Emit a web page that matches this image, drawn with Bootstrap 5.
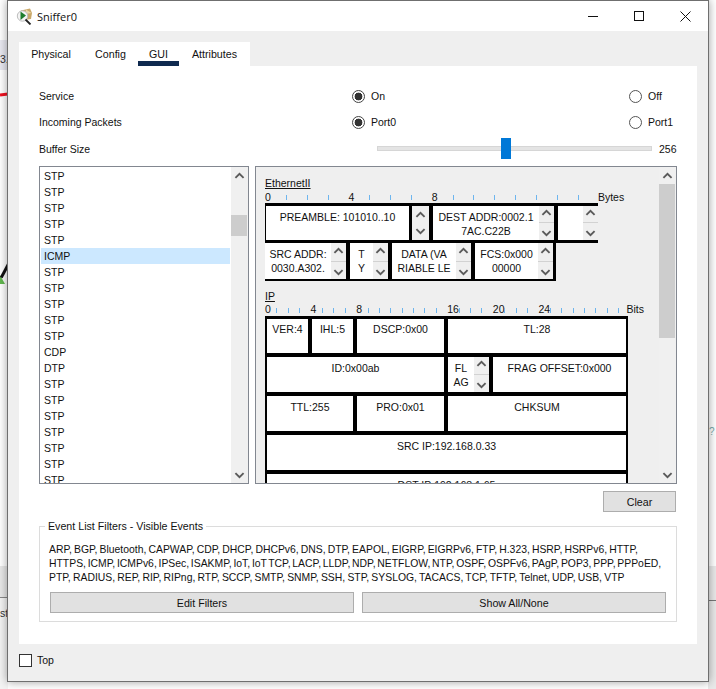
<!DOCTYPE html>
<html lang="en">
<head>
<meta charset="utf-8">
<title>Sniffer0</title>
<link href="https://cdn.jsdelivr.net/npm/bootstrap@5.3.0/dist/css/bootstrap.min.css" rel="stylesheet">
<style>
html,body{height:689px;overflow:hidden}
body{background:#fff;position:relative;font:10.5px/14px "Liberation Sans",Arial,sans-serif;color:#111}
.decor{position:absolute;overflow:hidden;color:#333}
.d-a{left:0;top:40px;width:8px;height:30px;background:#e9e9f1;padding-top:12px}
.d-b{left:0;top:93px;width:8px;height:3px;background:#f01020;transform:rotate(-6deg)}
.d-c{left:-3px;top:269px;width:16px;height:3px;background:#111;transform:rotate(-62deg)}
.d-d{left:0;top:275px;width:5px;height:9px;background:#62b84f;clip-path:polygon(0 0,100% 100%,0 100%)}
.d-e{left:0;top:566px;width:8px;height:123px;background:#e8e8e8}
.d-f{left:0;top:597px;width:8px;height:92px;background:#f4f4f4;border-top:1px solid #888;padding-top:8px}
.d-g{left:708px;top:566px;width:8px;height:123px;background:#e9e9e9}
.d-h{left:708px;top:600px;width:8px;height:1px;background:#777}
.d-i{left:709px;top:425px;color:#7aa;font-size:10px}
.winbox{position:absolute;left:7px;top:0;width:702px;height:682px;background:#efefef;border:1px solid #6f6f6f;box-shadow:0 0 9px rgba(0,0,0,.38)}
.titlerow{height:30px;background:#fff;padding-left:8px}
.titletext{font:11px "Open Sans",sans-serif;color:#111;margin-left:4px}
.capbtn{width:46px;height:30px}
.tabzone{padding:11px 11px 0}
.tabset{width:231px;height:24px;background:#fff;flex-wrap:nowrap}
.tabset .nav-link{height:24px;padding:5px 0 0;text-align:center;color:#111;font-size:10.67px;line-height:14px}
.tabset .nav-link.active{border-bottom:5px solid #0f2a4f}
.tb1{width:64px}.tb2{width:55px}.tb3{width:41px}.tb4{width:71px}
.mainpanel{background:#fff;height:578px;padding:17px 20px 0}
.setrow{height:26px}
.setdrop{margin-top:1px}
.setname{width:313px}
.setmid{width:277px}
.pick{width:13px;height:13px;margin:0 6px 0 0;border:1px solid #555;background-color:#fff;flex:none;float:none}
.pick:checked{background-color:#fff;border-color:#444;background-image:radial-gradient(circle,#333 3.6px,transparent 4.2px)}
.pick:focus{box-shadow:none;border-color:#555}
.squarebox[type=checkbox]{width:13px;height:13px;margin:0 5px 0 0;border:1px solid #333;border-radius:0;float:none}
.slide{width:275px;height:21px;margin:-2px 0 0 25px;padding:0}
.slide::-webkit-slider-runnable-track{height:5px;background:#e4e4e4;border:1px solid #d6d6d6;border-radius:0}
.slide::-webkit-slider-thumb{appearance:none;-webkit-appearance:none;width:10px;height:21px;margin-top:-9px;background:#0078d7;border-radius:0;border:0}
.slideval{margin-left:7px}
.workzone{height:318px;gap:6px;margin-top:4px}
.loglist{width:210px;border:1px solid #828790;background:#fff;overflow:hidden}
.logitems{width:191px;padding:1px 1px 0 1px;overflow:hidden}
.logitems div{height:16px;line-height:16px;padding-left:3px}
.logitems .picked{background:#cce8ff}
.vbar{width:17px;background:#f0f0f0;flex:none;position:relative}
.vbar svg{display:block;margin:0 auto}
.vup{padding-top:5px}
.vbar .vdown{position:absolute;bottom:4px;left:3px}
.thumb-a{position:absolute;left:0;right:1px;top:48px;height:21px;background:#cdcdcd}
.thumb-b{position:absolute;left:0;right:1px;top:17px;height:154px;background:#cdcdcd}
.detailbox{width:422px;border:1px solid #828790;background:#efefef;overflow:hidden}
.detailflow{flex:1;min-width:0;padding:10px 0 0 9px;overflow:hidden}
.blocktitle{height:13px;line-height:13px;text-decoration:underline}
.mtip{margin-top:9px}
.ruler{height:13px;line-height:13px;flex-wrap:nowrap}
.rule8{padding-top:1px}
.rule8 .rc{width:20.85px}
.rule32 .rc{width:11.4px}
.rc{flex:none;display:flex;align-items:center;white-space:nowrap}
.rc i{display:block;width:1px;height:5px;background:#6db5ee;margin-top:1px}
.unit8{margin-left:-.6px}
.unit32{margin-left:-3px}
.prow{background:#000;flex-wrap:nowrap}
.cellw{background:#fff;text-align:center;overflow:hidden;white-space:nowrap;display:flex}
.cellw>span{flex:1;min-width:0;overflow:hidden;padding-top:3px}
.spin{width:15px;flex:none;background:#efefef;display:flex;flex-direction:column;align-items:center;justify-content:space-around}
.spin svg{display:block}
.spin hr{margin:0;width:100%;border:0;height:1px;background:#d2d2d2;opacity:1}
.e1{width:333px;padding:3px 0 3px 1px;height:40px}
.e1 .cellw{height:34px}
.e2{width:291px;height:38px;padding-bottom:2px}
.e2 .cellw{height:36px}
.pv{padding-top:4px!important}
.w143{width:143px}.w17{width:17px}.w121{width:121px}.w40{width:40px}
.w81{width:81px}.w38{width:38px}.w79{width:79px}.w78{width:78px}
.w41{width:41px}.w87{width:87px}.w178{width:178px}.w177{width:177px}.w133{width:133px}.w86{width:86px}.w359{width:359px}
.m3{margin-left:3px}.m4{margin-left:4px}
.iprow{width:363px;padding:0 2px 4px;gap:4px;height:39px}
.iprow .cellw{height:35px}
.iptop{padding-top:3px;height:41px}
.iptop .cellw{height:34px}
.actbtn{background:#e1e1e1;border:1px solid #adadad;border-radius:0;color:#111;font-size:10.67px;line-height:14px;padding:0;height:21px}
.clearbtn{width:73px;margin:7px 1px 0 auto;display:block}
.filterbox{margin-top:8px;border:1px solid #dcdcdc;padding:10px 10px 8px 9px;height:102px}
.filterbox legend{float:none;width:auto;font-size:10.67px;line-height:13px;padding:0 3px;margin:0 0 0 -4px}
.filtertext{white-space:nowrap;height:42px;font-size:10.4px}
.filtertext span{display:block}
.fl1{word-spacing:-.8px}.fl2{word-spacing:-1.15px}.fl3{word-spacing:-.67px}
.filterbtns{gap:8px;margin:7px 0 0 1px}
.filterbtns .actbtn{flex:1}
.topline{padding:9px 0 0 0}
</style>
</head>
<body>
<svg width="0" height="0" class="position-absolute">
<symbol id="cu" viewBox="0 0 9 6"><path d="M1 5L4.500 1.500 8 5" fill="none" stroke="#5a5a5a" stroke-width="1.600"/></symbol>
<symbol id="cd" viewBox="0 0 9 6"><path d="M1 1L4.500 4.500 8 1" fill="none" stroke="#5a5a5a" stroke-width="1.600"/></symbol>
</svg>

<div class="decor d-a">3.</div>
<div class="decor d-b"></div>
<div class="decor d-d"></div>
<div class="decor d-c"></div>
<div class="decor d-e"></div>
<div class="decor d-f">sti</div>
<div class="decor d-g"></div>
<div class="decor d-h"></div>
<div class="decor d-i">?</div>

<div class="winbox">
  <div class="titlerow d-flex align-items-center">
    <svg width="17" height="17" viewBox="0 0 17 17">
      <path d="M5 2.500L14 0.500 16 5 15 11 8 12 5 8z" fill="#c9a86a"/>
      <path d="M10 1.500L15.500 5 9.500 6z" fill="#e9d7a8"/>
      <circle cx="6.500" cy="8" r="5.200" fill="#f4f4f4" stroke="#bdbdbd"/>
      <path d="M4.500 3.500L10 7.500 4.500 12z" fill="#1e7d2d"/>
      <path d="M9.500 11.500L14.500 16.500" stroke="#222" stroke-width="1.800"/>
    </svg>
    <span class="titletext">Sniffer0</span>
    <div class="ms-auto d-flex">
      <div class="capbtn d-flex align-items-center justify-content-center"><svg width="10" height="10" viewBox="0 0 10 10"><path d="M0 5.500H10" stroke="#111"/></svg></div>
      <div class="capbtn d-flex align-items-center justify-content-center"><svg width="10" height="10" viewBox="0 0 10 10"><rect x=".5" y=".5" width="9" height="9" fill="none" stroke="#111"/></svg></div>
      <div class="capbtn d-flex align-items-center justify-content-center"><svg width="11" height="11" viewBox="0 0 11 11"><path d="M.5 .5L10.500 10.500M10.500 .5L.5 10.500" stroke="#111"/></svg></div>
    </div>
  </div>

  <div class="tabzone">
    <ul class="nav tabset">
      <li class="nav-item tb1"><a class="nav-link" href="#">Physical</a></li>
      <li class="nav-item tb2"><a class="nav-link" href="#">Config</a></li>
      <li class="nav-item tb3"><a class="nav-link active" href="#">GUI</a></li>
      <li class="nav-item tb4"><a class="nav-link" href="#">Attributes</a></li>
    </ul>
    <div class="mainpanel">
      <div class="setrow d-flex align-items-center">
        <div class="setname">Service</div>
        <div class="setmid d-flex align-items-center"><input class="form-check-input pick" type="radio" name="svc" checked><span>On</span></div>
        <div class="d-flex align-items-center"><input class="form-check-input pick" type="radio" name="svc"><span>Off</span></div>
      </div>
      <div class="setrow d-flex align-items-center">
        <div class="setname">Incoming Packets</div>
        <div class="setmid d-flex align-items-center"><input class="form-check-input pick" type="radio" name="prt" checked><span>Port0</span></div>
        <div class="d-flex align-items-center"><input class="form-check-input pick" type="radio" name="prt"><span>Port1</span></div>
      </div>
      <div class="setrow setdrop d-flex align-items-center">
        <div class="setname">Buffer Size</div>
        <input class="form-range slide" type="range" min="0" max="100" step="0.1" value="46.8">
        <span class="slideval">256</span>
      </div>

      <div class="workzone d-flex">
        <div class="loglist d-flex">
          <div class="logitems flex-fill">
            <div>STP</div><div>STP</div><div>STP</div><div>STP</div><div>STP</div>
            <div class="picked">ICMP</div>
            <div>STP</div><div>STP</div><div>STP</div><div>STP</div><div>STP</div>
            <div>CDP</div><div>DTP</div>
            <div>STP</div><div>STP</div><div>STP</div><div>STP</div><div>STP</div><div>STP</div><div>STP</div>
          </div>
          <div class="vbar vup">
            <svg width="11" height="7"><use href="#cu"/></svg>
            <div class="thumb-a"></div>
            <svg class="vdown" width="11" height="7"><use href="#cd"/></svg>
          </div>
        </div>

        <div class="detailbox d-flex">
          <div class="detailflow">
            <div class="blocktitle">EthernetII</div>
            <div class="ruler rule8 d-flex">
              <span class="rc">0</span><span class="rc"><i></i></span><span class="rc"><i></i></span><span class="rc"><i></i></span>
              <span class="rc">4</span><span class="rc"><i></i></span><span class="rc"><i></i></span><span class="rc"><i></i></span>
              <span class="rc">8</span><span class="rc"><i></i></span><span class="rc"><i></i></span><span class="rc"><i></i></span>
              <span class="rc"><i></i></span><span class="rc"><i></i></span><span class="rc"><i></i></span><span class="rc"><i></i></span>
              <span class="unit8">Bytes</span>
            </div>
            <div class="prow e1 d-flex">
              <div class="cellw w143"><span class="pv">PREAMBLE: 101010..10</span></div>
              <div class="cellw w17 m3"><div class="spin w17"><svg width="11" height="7"><use href="#cu"/></svg><svg width="11" height="7"><use href="#cd"/></svg></div></div>
              <div class="cellw w121 m4"><span class="pv">DEST ADDR:0002.1<br>7AC.C22B</span><div class="spin"><svg width="11" height="7"><use href="#cu"/></svg><hr><svg width="11" height="7"><use href="#cd"/></svg></div></div>
              <div class="cellw w40 m4"><span></span><div class="spin"><svg width="11" height="7"><use href="#cu"/></svg><hr><svg width="11" height="7"><use href="#cd"/></svg></div></div>
            </div>
            <div class="prow e2 d-flex">
              <div class="cellw w81"><span class="pv">SRC ADDR:<br>0030.A302.</span><div class="spin"><svg width="11" height="7"><use href="#cu"/></svg><hr><svg width="11" height="7"><use href="#cd"/></svg></div></div>
              <div class="cellw w38 m4"><span class="pv">T<br>Y</span><div class="spin"><svg width="11" height="7"><use href="#cu"/></svg><hr><svg width="11" height="7"><use href="#cd"/></svg></div></div>
              <div class="cellw w79 m4"><span class="pv">DATA (VA<br>RIABLE LE</span><div class="spin"><svg width="11" height="7"><use href="#cu"/></svg><hr><svg width="11" height="7"><use href="#cd"/></svg></div></div>
              <div class="cellw w78 m4"><span class="pv">FCS:0x000<br>00000</span><div class="spin"><svg width="11" height="7"><use href="#cu"/></svg><hr><svg width="11" height="7"><use href="#cd"/></svg></div></div>
            </div>

            <div class="blocktitle mtip">IP</div>
            <div class="ruler rule32 d-flex">
              <span class="rc">0</span><span class="rc"><i></i></span><span class="rc"><i></i></span><span class="rc"><i></i></span>
              <span class="rc">4</span><span class="rc"><i></i></span><span class="rc"><i></i></span><span class="rc"><i></i></span>
              <span class="rc">8</span><span class="rc"><i></i></span><span class="rc"><i></i></span><span class="rc"><i></i></span>
              <span class="rc"><i></i></span><span class="rc"><i></i></span><span class="rc"><i></i></span><span class="rc"><i></i></span>
              <span class="rc">16</span><span class="rc"><i></i></span><span class="rc"><i></i></span><span class="rc"><i></i></span>
              <span class="rc">20</span><span class="rc"><i></i></span><span class="rc"><i></i></span><span class="rc"><i></i></span>
              <span class="rc">24</span><span class="rc"><i></i></span><span class="rc"><i></i></span><span class="rc"><i></i></span>
              <span class="rc"><i></i></span><span class="rc"><i></i></span><span class="rc"><i></i></span><span class="rc"><i></i></span>
              <span class="unit32">Bits</span>
            </div>
            <div class="prow iprow iptop d-flex">
              <div class="cellw w41"><span>VER:4</span></div>
              <div class="cellw w41"><span>IHL:5</span></div>
              <div class="cellw w87"><span>DSCP:0x00</span></div>
              <div class="cellw w178"><span>TL:28</span></div>
            </div>
            <div class="prow iprow d-flex">
              <div class="cellw w177"><span class="pv">ID:0x00ab</span></div>
              <div class="cellw w41"><span class="pv">FL<br>AG</span><div class="spin"><svg width="11" height="7"><use href="#cu"/></svg><hr><svg width="11" height="7"><use href="#cd"/></svg></div></div>
              <div class="cellw w133"><span class="pv">FRAG OFFSET:0x000</span></div>
            </div>
            <div class="prow iprow d-flex">
              <div class="cellw w86"><span class="pv">TTL:255</span></div>
              <div class="cellw w87"><span class="pv">PRO:0x01</span></div>
              <div class="cellw w178"><span class="pv">CHKSUM</span></div>
            </div>
            <div class="prow iprow d-flex">
              <div class="cellw w359"><span class="pv">SRC IP:192.168.0.33</span></div>
            </div>
            <div class="prow iprow d-flex">
              <div class="cellw w359"><span class="pv">DST IP:192.168.1.65</span></div>
            </div>
          </div>
          <div class="vbar vup">
            <svg width="11" height="7"><use href="#cu"/></svg>
            <div class="thumb-b"></div>
            <svg class="vdown" width="11" height="7"><use href="#cd"/></svg>
          </div>
        </div>
      </div>

      <button class="btn actbtn clearbtn" type="button">Clear</button>

      <fieldset class="filterbox">
        <legend>Event List Filters - Visible Events</legend>
        <div class="filtertext"><span class="fl1">ARP, BGP, Bluetooth, CAPWAP, CDP, DHCP, DHCPv6, DNS, DTP, EAPOL, EIGRP, EIGRPv6, FTP, H.323, HSRP, HSRPv6, HTTP,</span><span class="fl2">HTTPS, ICMP, ICMPv6, IPSec, ISAKMP, IoT, IoT TCP, LACP, LLDP, NDP, NETFLOW, NTP, OSPF, OSPFv6, PAgP, POP3, PPP, PPPoED,</span><span class="fl3">PTP, RADIUS, REP, RIP, RIPng, RTP, SCCP, SMTP, SNMP, SSH, STP, SYSLOG, TACACS, TCP, TFTP, Telnet, UDP, USB, VTP</span></div>
        <div class="filterbtns d-flex">
          <button class="btn actbtn" type="button">Edit Filters</button>
          <button class="btn actbtn" type="button">Show All/None</button>
        </div>
      </fieldset>
    </div>
    <div class="topline d-flex align-items-center">
      <input class="form-check-input squarebox" type="checkbox"><span>Top</span>
    </div>
  </div>
</div>
<script src="https://cdn.jsdelivr.net/npm/bootstrap@5.3.0/dist/js/bootstrap.bundle.min.js"></script>
</body>
</html>
